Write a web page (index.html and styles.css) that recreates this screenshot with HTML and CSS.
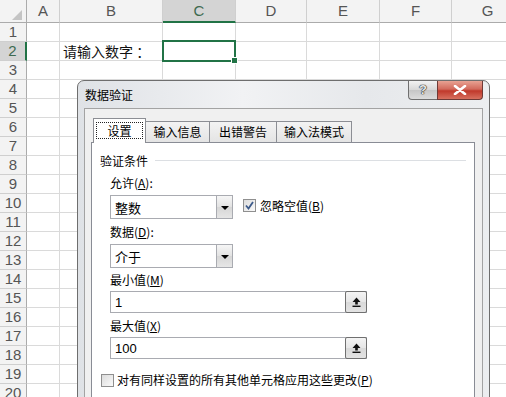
FILE: index.html
```html
<!DOCTYPE html>
<html lang="zh-CN">
<head>
  <meta charset="UTF-8">
  <title>数据验证</title>
  <link rel="stylesheet" href="styles.css">
</head>
<body>

<div class="sheet">
  <div class="row head-row">
    <span class="corner"><svg width="12" height="12" viewBox="0 0 12 12"><polygon points="11,1 11,11 1,11" fill="#c4c4c4"/></svg></span>
    <span>A</span><span>B</span><span class="col-sel">C</span><span>D</span><span>E</span><span>F</span><span>G</span>
  </div>
  <div class="row"><span class="rh">1</span><span></span><span></span><span></span><span></span><span></span><span></span><span></span></div>
  <div class="row">
    <span class="rh rh-sel">2</span><span></span>
    <span class="cell-text">请输入数字 ：</span>
    <span class="cell-sel"><i class="handle"></i></span>
    <span></span><span></span><span></span><span></span>
  </div>
  <div class="row"><span class="rh">3</span><span></span><span></span><span></span><span></span><span></span><span></span><span></span></div>
  <div class="row"><span class="rh">4</span><span></span><span></span><span></span><span></span><span></span><span></span><span></span></div>
  <div class="row"><span class="rh">5</span><span></span><span></span><span></span><span></span><span></span><span></span><span></span></div>
  <div class="row"><span class="rh">6</span><span></span><span></span><span></span><span></span><span></span><span></span><span></span></div>
  <div class="row"><span class="rh">7</span><span></span><span></span><span></span><span></span><span></span><span></span><span></span></div>
  <div class="row"><span class="rh">8</span><span></span><span></span><span></span><span></span><span></span><span></span><span></span></div>
  <div class="row"><span class="rh">9</span><span></span><span></span><span></span><span></span><span></span><span></span><span></span></div>
  <div class="row"><span class="rh">10</span><span></span><span></span><span></span><span></span><span></span><span></span><span></span></div>
  <div class="row"><span class="rh">11</span><span></span><span></span><span></span><span></span><span></span><span></span><span></span></div>
  <div class="row"><span class="rh">12</span><span></span><span></span><span></span><span></span><span></span><span></span><span></span></div>
  <div class="row"><span class="rh">13</span><span></span><span></span><span></span><span></span><span></span><span></span><span></span></div>
  <div class="row"><span class="rh">14</span><span></span><span></span><span></span><span></span><span></span><span></span><span></span></div>
  <div class="row"><span class="rh">15</span><span></span><span></span><span></span><span></span><span></span><span></span><span></span></div>
  <div class="row"><span class="rh">16</span><span></span><span></span><span></span><span></span><span></span><span></span><span></span></div>
  <div class="row"><span class="rh">17</span><span></span><span></span><span></span><span></span><span></span><span></span><span></span></div>
  <div class="row"><span class="rh">18</span><span></span><span></span><span></span><span></span><span></span><span></span><span></span></div>
  <div class="row"><span class="rh">19</span><span></span><span></span><span></span><span></span><span></span><span></span><span></span></div>
  <div class="row"><span class="rh">20</span><span></span><span></span><span></span><span></span><span></span><span></span><span></span></div>

  <!-- Data validation dialog floating over the sheet -->
  <div class="dialog">
    <div class="titlebar">
      <span class="title">数据验证</span>
      <div class="caption-btns">
        <span class="btn-help">?</span>
        <span class="btn-close">
          <svg width="14" height="10" viewBox="0 0 14 10"><path d="M2 1 L12 9 M12 1 L2 9" stroke="#fff" stroke-width="2.6" stroke-linecap="round"/></svg>
        </span>
      </div>
    </div>

    <div class="client">
      <div class="tabs">
        <span class="tab tab-active"><span class="focus">设置</span></span>
        <span class="tab tab-2">输入信息</span>
        <span class="tab tab-3">出错警告</span>
        <span class="tab tab-4">输入法模式</span>
      </div>

      <div class="panel">
        <div class="group-title"><span>验证条件</span></div>

        <div class="fields">
          <p class="lbl lbl-first">允许(<u>A</u>):</p>
          <div class="inline">
            <div class="combo"><span>整数</span><span class="combo-btn"><i class="tri"></i></span></div>
            <label class="check">
              <span class="box"><svg width="11" height="11" viewBox="0 0 11 11"><path d="M2 5.5 L4.5 8.5 L9 2" fill="none" stroke="#3c5a8a" stroke-width="1.8"/></svg></span>
              <span>忽略空值(<u>B</u>)</span>
            </label>
          </div>

          <p class="lbl">数据(<u>D</u>):</p>
          <div class="combo"><span>介于</span><span class="combo-btn"><i class="tri"></i></span></div>

          <p class="lbl lbl-tight">最小值(<u>M</u>)</p>
          <div class="input"><span>1</span><span class="ref-btn"><svg width="9" height="10" viewBox="0 0 9 10"><path d="M4.5 0.5 L8.5 5 L5.8 5 L5.8 7.5 L3.2 7.5 L3.2 5 L0.5 5 Z" fill="#111"/><rect x="0.5" y="8.6" width="8" height="1.4" fill="#111"/></svg></span></div>

          <p class="lbl">最大值(<u>X</u>)</p>
          <div class="input"><span>100</span><span class="ref-btn"><svg width="9" height="10" viewBox="0 0 9 10"><path d="M4.5 0.5 L8.5 5 L5.8 5 L5.8 7.5 L3.2 7.5 L3.2 5 L0.5 5 Z" fill="#111"/><rect x="0.5" y="8.6" width="8" height="1.4" fill="#111"/></svg></span></div>
        </div>

        <label class="check check-all">
          <span class="box"></span>
          <span>对有同样设置的所有其他单元格应用这些更改(<u>P</u>)</span>
        </label>
      </div>
    </div>
  </div>
</div>

</body>
</html>
```

FILE: styles.css
```css
body {
  margin: 0;
  background: #ffffff;
  font-family: "Liberation Sans", "Noto Sans CJK SC", sans-serif;
  overflow: hidden;
}
.sheet {
  position: relative;
  width: 506px;
  height: 397px;
  overflow: hidden;
}
.row {
  display: grid;
  grid-template-columns: 27px 33px 103px 73px 71px 73px 72px 72px;
  height: 19px;
}
.row > span {
  box-sizing: border-box;
  border-right: 1px solid #dadada;
  border-bottom: 1px solid #dadada;
}
.head-row {
  height: 23px;
}
.head-row > span {
  background: #f3f3f3;
  border-right: 1px solid #cfcfcf;
  border-bottom: 1px solid #ababab;
  text-align: center;
  font-size: 15px;
  line-height: 22px;
  color: #555;
}
.head-row > .corner {
  border-right-color: #ababab;
  display: flex;
  align-items: flex-end;
  justify-content: flex-end;
  padding: 0 3px 1px 0;
}
.head-row > .col-sel {
  background: #d4d4d4;
  color: #3e6a50;
  border-bottom: 2px solid #217346;
  line-height: 21px;
}
.row > .rh {
  background: #f3f3f3;
  border-right: 1px solid #ababab;
  border-bottom: 1px solid #cfcfcf;
  text-align: center;
  font-size: 15px;
  line-height: 18px;
  color: #555;
}
.row > .rh-sel {
  background: #d4d4d4;
  color: #3e6a50;
  border-right: 2px solid #217346;
}
.cell-text {
  padding-left: 3px;
  font-family: "Noto Sans CJK SC", sans-serif;
  font-size: 14px;
  line-height: 18px;
  color: #111;
  white-space: pre;
}
.cell-sel {
  position: relative;
}
.cell-sel::after {
  content: "";
  position: absolute;
  left: -1px;
  top: -2px;
  right: -1px;
  bottom: -2px;
  border: 2px solid #217346;
}
.handle {
  position: absolute;
  right: -3px;
  bottom: -4px;
  width: 5px;
  height: 5px;
  background: #217346;
  border: 1px solid #fff;
  z-index: 1;
}

/* dialog */
.dialog {
  position: absolute;
  left: 77px;
  top: 80px;
  width: 413px;
  height: 330px;
  box-sizing: border-box;
  border: 1px solid #6e6e6e;
  border-radius: 7px 7px 0 0;
  background: linear-gradient(to right, #dfe2e6, #f1f2f4 40%, #e6e8eb 70%, #eceef0);
  font-family: "Noto Sans CJK SC", sans-serif;
  font-size: 12px;
  color: #000;
  display: flex;
  flex-direction: column;
}
.titlebar {
  position: relative;
  height: 27px;
  display: flex;
  align-items: center;
  padding-left: 7px;
}
.title {
  font-size: 12px;
  line-height: 16px;
}
.caption-btns {
  position: absolute;
  top: 0;
  right: 6px;
  display: flex;
}
.btn-help {
  box-sizing: border-box;
  width: 29px;
  height: 19px;
  border: 1px solid #6f6f6f;
  border-top: none;
  border-right: none;
  border-radius: 0 0 0 4px;
  background: linear-gradient(#f2f2f2, #d7d7d7 50%, #c6c6c6 51%, #dcdcdc);
  text-align: center;
  font-family: "Liberation Sans", sans-serif;
  font-weight: bold;
  font-size: 13px;
  line-height: 17px;
  color: #e8e8e8;
  text-shadow: 0 0 1px #222, 0 0 1px #222, 0 0 1px #222;
}
.btn-close {
  box-sizing: border-box;
  width: 46px;
  height: 19px;
  border: 1px solid #6f3a36;
  border-top: none;
  border-radius: 0 0 4px 0;
  background: linear-gradient(#e8a293, #d26a5c 45%, #c0392b 55%, #d7705f);
  display: flex;
  align-items: center;
  justify-content: center;
}
.client {
  flex: 1;
  margin: 0 6px;
  box-sizing: border-box;
  border: 1px solid #a3a3a3;
  background: #f0f0f0;
  padding: 9px 7px 0 6px;
  display: flex;
  flex-direction: column;
}
.tabs {
  display: flex;
  align-items: flex-end;
  height: 24px;
  padding-left: 2px;
  position: relative;
  z-index: 1;
}
.tab {
  box-sizing: border-box;
  height: 21px;
  border: 1px solid #8c8e94;
  border-bottom: none;
  margin-left: -1px;
  background: linear-gradient(#f3f3f3, #e4e4e4);
  text-align: center;
  line-height: 19px;
  white-space: nowrap;
}
.tab-active {
  width: 53px;
  height: 25px;
  margin-left: 0;
  margin-bottom: -1px;
  background: #ffffff;
  padding-top: 3px;
  position: relative;
  z-index: 2;
}
.focus {
  display: block;
  margin: 0 2px;
  border: 1px dotted #222;
  line-height: 15px;
}
.tab-2 { width: 65px; }
.tab-3 { width: 68px; }
.tab-4 { width: 76px; }
.panel {
  flex: 1;
  width: 384px;
  box-sizing: border-box;
  border: 1px solid #898c95;
  background: #ffffff;
  padding: 10px 8px 0 8px;
}
.group-title {
  display: flex;
  align-items: center;
  line-height: 16px;
  gap: 7px;
}
.group-title::after {
  content: "";
  flex: 1;
  border-top: 1px solid #dcdfe3;
  margin-top: -1px;
}
.fields {
  padding-left: 10px;
}
.lbl {
  margin: 5px 0 4px;
  line-height: 16px;
}
.lbl-first {
  margin-top: 6px;
}
.lbl-tight {
  margin-top: 4px;
  margin-bottom: 3px;
}
.fields .input + .lbl {
  margin-bottom: 3px;
}
u {
  text-decoration: underline;
  text-underline-offset: 1px;
}
.inline {
  display: flex;
  align-items: center;
  gap: 10px;
}
.combo {
  box-sizing: border-box;
  width: 123px;
  height: 24px;
  border: 1px solid #a9abb1;
  background: #ffffff;
  display: flex;
  align-items: center;
  justify-content: space-between;
  padding-left: 4px;
  font-size: 13px;
}
.combo-btn {
  box-sizing: border-box;
  width: 16px;
  height: 22px;
  border-left: 1px solid #a9abb1;
  background: linear-gradient(#f6f6f6, #e2e2e2 50%, #d6d6d6 51%, #e6e6e6);
  display: flex;
  align-items: center;
  justify-content: center;
}
.tri {
  width: 0;
  height: 0;
  border-left: 4px solid transparent;
  border-right: 4px solid transparent;
  border-top: 4px solid #000;
  margin-top: 1px;
}
.check {
  display: flex;
  align-items: center;
  gap: 4px;
  line-height: 16px;
  margin-top: -3px;
}
.box {
  box-sizing: border-box;
  width: 13px;
  height: 13px;
  border: 1px solid #8f8f8f;
  background: linear-gradient(135deg, #dcdcdc, #fafafa);
  display: flex;
  align-items: center;
  justify-content: center;
}
.input {
  box-sizing: border-box;
  width: 257px;
  height: 22px;
  border: 1px solid #a9abb1;
  background: #ffffff;
  display: flex;
  align-items: center;
  justify-content: space-between;
  padding-left: 4px;
  font-family: "Liberation Sans", sans-serif;
  font-size: 13px;
}
.ref-btn {
  box-sizing: border-box;
  width: 22px;
  height: 22px;
  margin-right: -1px;
  border: 1px solid #707070;
  border-radius: 2px;
  background: linear-gradient(#f4f4f4, #e6e6e6 50%, #d9d9d9 51%, #e3e3e3);
  display: flex;
  align-items: center;
  justify-content: center;
}
.check-all {
  margin-top: 13px;
  margin-left: 1px;
  gap: 3px;
}
```
